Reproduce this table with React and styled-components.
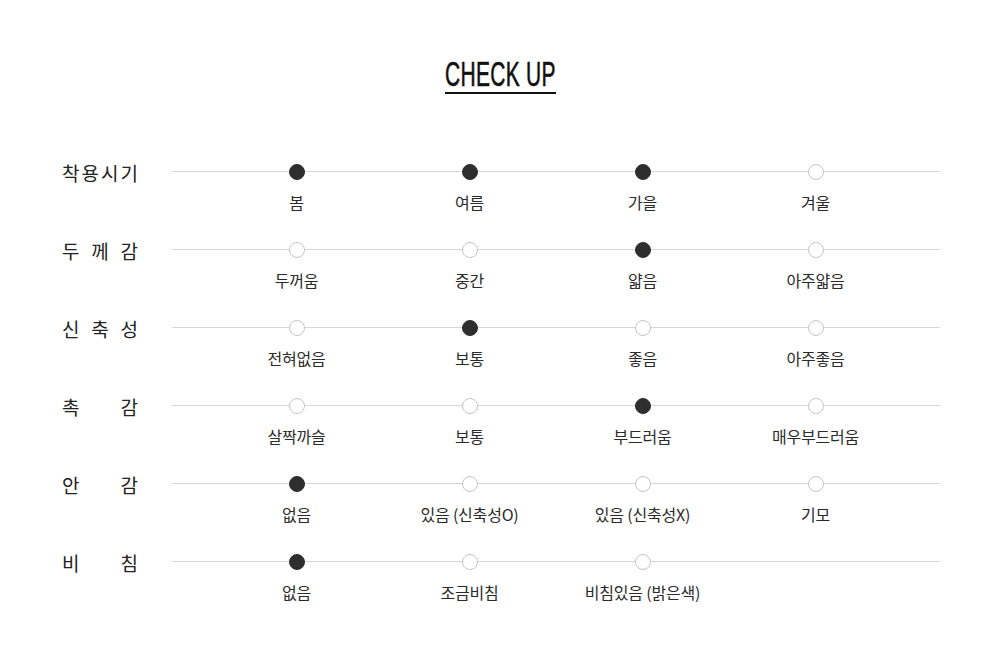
import React from 'react'
import styled, { createGlobalStyle } from 'styled-components'

const GlobalStyle = createGlobalStyle`
  html, body {
    margin: 0;
    padding: 0;
    background: #fff;
  }
  body {
    font-family: "Noto Sans CJK KR", "Noto Sans", sans-serif;
    color: #222;
  }
`

const Page = styled.div`
  width: 1000px;
  height: 661px;
  padding-top: 56px;
  box-sizing: border-box;
`

const TitleWrap = styled.div`
  display: flex;
  justify-content: center;
  height: 38px;
  margin-bottom: 62px;
`

// no condensed face installed, so squeeze a regular sans horizontally
const Title = styled.h2`
  margin: 0;
  font-family: "Liberation Sans", Arial, sans-serif;
  font-weight: 400;
  font-size: 35px;
  line-height: 35px;
  color: #111;
  letter-spacing: 0.5px;
  border-bottom: 2px solid #111;
  transform: scaleX(0.6);
  transform-origin: center top;
  white-space: nowrap;
  -webkit-text-stroke: 0.6px #111;
`

const Table = styled.div`
  display: flex;
  flex-direction: column;
  padding: 0 60px 0 62px;
`

const Row = styled.div`
  display: flex;
  height: 78px;
`

const Label = styled.div`
  width: 76px;
  height: 32px;
  margin-right: 34px;
  display: flex;
  justify-content: space-between;
  align-items: center;
  font-size: 19px;
  color: #222;
`

const Track = styled.div`
  position: relative;
  flex: 1;
  display: grid;
  grid-template-columns: repeat(4, 173px);
  padding-left: 38px;
  align-content: start;

  &::before {
    content: '';
    position: absolute;
    left: 0;
    right: 0;
    top: 15px;
    height: 1px;
    background: #d6d6d6;
  }
`

const Option = styled.div`
  position: relative;
  display: flex;
  flex-direction: column;
  align-items: center;
`

const Dot = styled.span`
  width: 16px;
  height: 16px;
  margin-top: 8px;
  border-radius: 50%;
  box-sizing: border-box;
  background: ${p => (p.$on ? '#2e2e2e' : '#fff')};
  border: 1px solid ${p => (p.$on ? '#2e2e2e' : '#c4c4c4')};
`

const OptionText = styled.span`
  margin-top: 11px;
  font-size: 16px;
  line-height: 22px;
  color: #2a2a2a;
  white-space: nowrap;
  letter-spacing: -0.2px;
`

const rows = [
  { label: '착용시기', options: [['봄', 1], ['여름', 1], ['가을', 1], ['겨울', 0]] },
  { label: '두께감', options: [['두꺼움', 0], ['중간', 0], ['얇음', 1], ['아주얇음', 0]] },
  { label: '신축성', options: [['전혀없음', 0], ['보통', 1], ['좋음', 0], ['아주좋음', 0]] },
  { label: '촉감', options: [['살짝까슬', 0], ['보통', 0], ['부드러움', 1], ['매우부드러움', 0]] },
  { label: '안감', options: [['없음', 1], ['있음 (신축성O)', 0], ['있음 (신축성X)', 0], ['기모', 0]] },
  { label: '비침', options: [['없음', 1], ['조금비침', 0], ['비침있음 (밝은색)', 0]] },
]

export default function App() {
  return (
    <Page>
      <GlobalStyle />
      <TitleWrap>
        <Title>CHECK UP</Title>
      </TitleWrap>
      <Table>
        {rows.map(row => (
          <Row key={row.label}>
            <Label>
              {row.label.split('').map((ch, i) => (
                <span key={i}>{ch}</span>
              ))}
            </Label>
            <Track>
              {row.options.map(([text, on]) => (
                <Option key={text}>
                  <Dot $on={!!on} />
                  <OptionText>{text}</OptionText>
                </Option>
              ))}
            </Track>
          </Row>
        ))}
      </Table>
    </Page>
  )
}
